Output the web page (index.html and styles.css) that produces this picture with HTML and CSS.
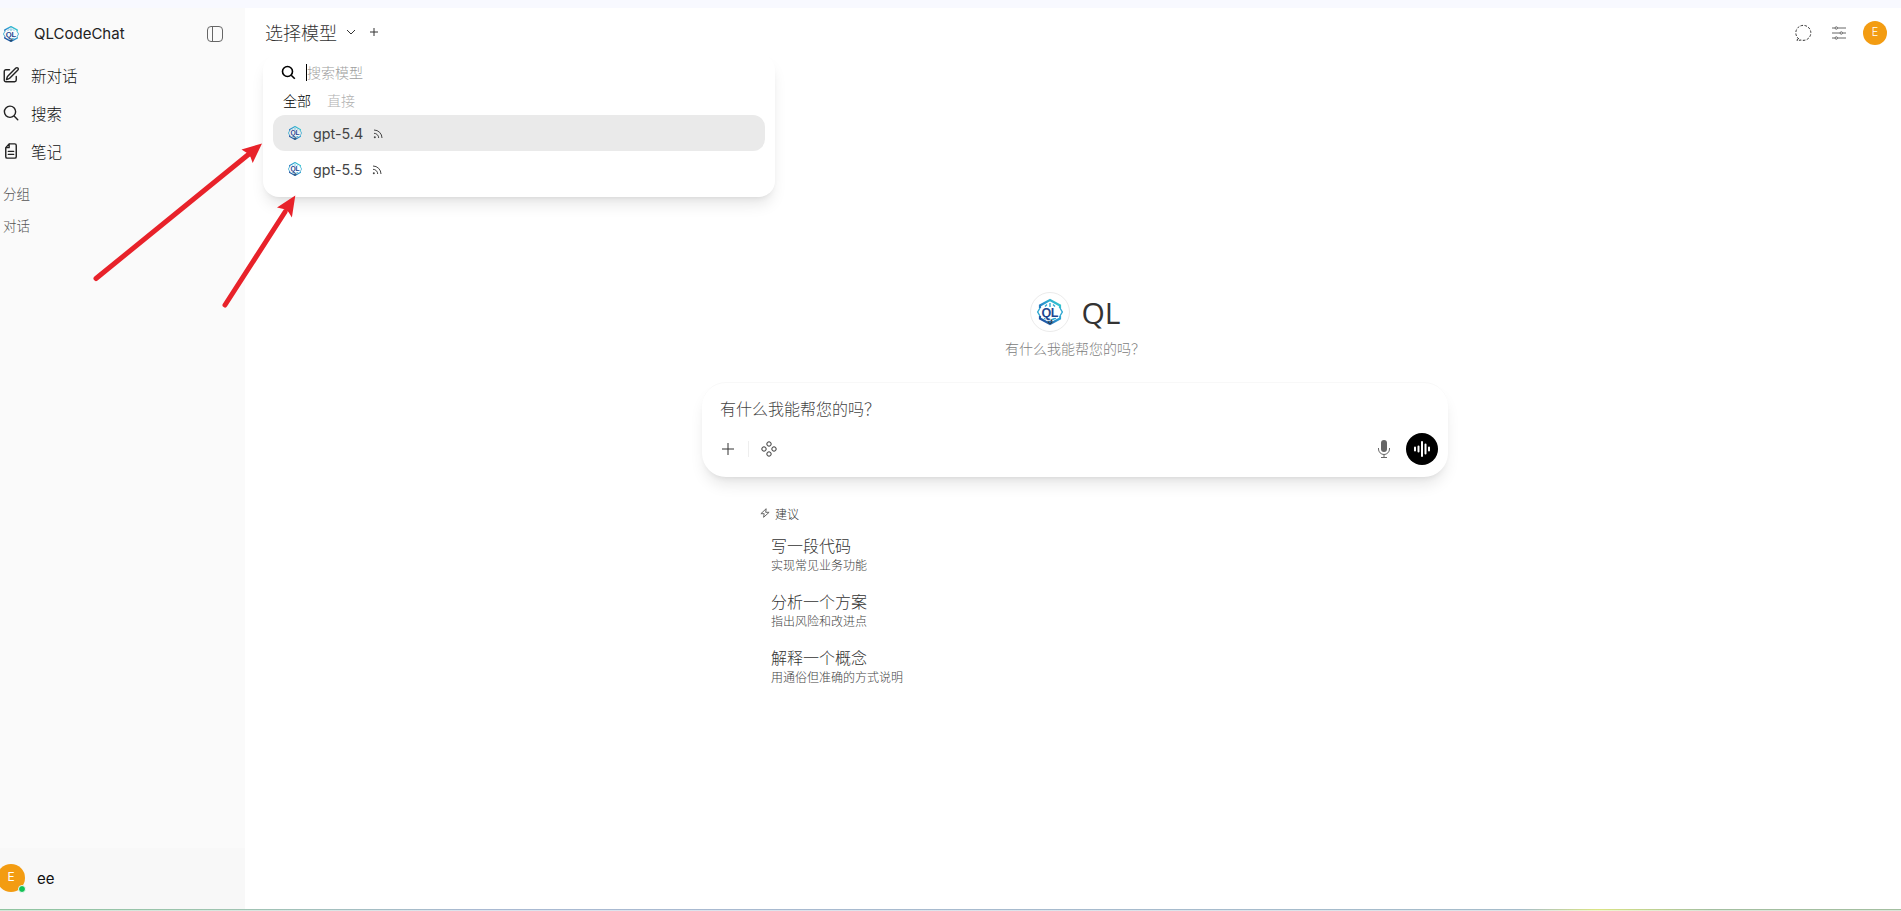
FILE: index.html
```html
<!DOCTYPE html>
<html lang="zh-CN">
<head>
  <meta charset="UTF-8" />
  <meta name="viewport" content="width=device-width, initial-scale=1.0"/>
  <title>QLCodeChat</title>
  <link rel="stylesheet" href="styles.css">
</head>
<body>
  <!-- shared logo -->
  <svg class="defs" width="0" height="0">
    <defs>
      <linearGradient id="logoGrad" x1="1" y1="0" x2="0" y2="1">
        <stop offset="0" stop-color="#35d0cf"/>
        <stop offset="0.5" stop-color="#2a93cf"/>
        <stop offset="1" stop-color="#1d3f94"/>
      </linearGradient>
      <symbol id="logo" viewBox="0 0 26 26">
        <path d="M3 9V6.500L13 1l10 5.500V9M3 17v2.500L13 25l10-5.500V17" fill="none" stroke="url(#logoGrad)" stroke-width="2.200"/>
        <path d="M3 9l-2.300 4L3 17M23 9l2.300 4-2.300 4M8 7.500l2-2M13 8V4M18 7.500l-2-2M7 19l6 2.500 6-2.500" fill="none" stroke="#2fa9d2" stroke-width="1.400"/>
        <circle cx="13" cy="22.500" r="2" fill="#1f6fb8"/>
        <text x="12.700" y="17.500" text-anchor="middle" class="logo-text">QL</text>
      </symbol>
      <symbol id="rss" viewBox="0 0 10 10">
        <path d="M1 1a8 8 0 0 1 8 8M1 4.300A4.700 4.700 0 0 1 5.700 9" fill="none" stroke="currentColor" stroke-width="1"/>
        <circle cx="1.800" cy="8.200" r="1" fill="currentColor" stroke="none"/>
      </symbol>
    </defs>
  </svg>

  <div class="top-strip"></div>

  <div class="layout">
    <aside class="sidebar">
      <div class="brand">
        <svg class="brand-logo" width="16" height="16"><use href="#logo"/></svg>
        <strong>QLCodeChat</strong>
        <svg class="toggle" width="18" height="18" viewBox="0 0 18 18">
          <rect x="1.500" y="1.500" width="15" height="15" rx="3.500"/>
          <path d="M6.500 1.500v15"/>
        </svg>
      </div>

      <nav>
        <a href="#">
          <svg width="18" height="18" viewBox="0 0 24 24"><path d="m16.862 4.487 1.687-1.688a1.875 1.875 0 1 1 2.652 2.652L10.582 16.070a4.500 4.500 0 0 1-1.897 1.130L6 18l.8-2.685a4.500 4.500 0 0 1 1.130-1.897l8.932-8.931ZM19 14v4.750A2.250 2.250 0 0 1 16.750 21H5.250A2.250 2.250 0 0 1 3 18.750V7.250A2.250 2.250 0 0 1 5.250 5H10"/></svg>
          新对话
        </a>
        <a href="#">
          <svg width="18" height="18" viewBox="0 0 24 24"><path d="m21 21-5.200-5.200m0 0A7.500 7.500 0 1 0 5.200 5.200a7.500 7.500 0 0 0 10.600 10.600Z"/></svg>
          搜索
        </a>
        <a href="#">
          <svg width="18" height="18" viewBox="0 0 24 24"><path d="M9.500 2.500H17A2 2 0 0 1 19 4.500v15a2 2 0 0 1-2 2H7a2 2 0 0 1-2-2V7.500l4.500-5v5H5M8.500 12.500h7M8.500 16.500h7"/></svg>
          笔记
        </a>
      </nav>

      <div class="section">分组</div>
      <div class="section">对话</div>

      <div class="user">
        <div class="avatar">E<span class="online"></span></div>
        <span>ee</span>
      </div>
    </aside>

    <main>
      <header>
        <div class="model-select">
          <span>选择模型</span>
          <svg class="chevron" width="10" height="10" viewBox="0 0 10 10"><path d="m1 3 4 4 4-4"/></svg>
          <svg class="add" width="10" height="10" viewBox="0 0 10 10"><path d="M5 1v8M1 5h8"/></svg>

          <div class="menu">
            <div class="menu-search">
              <svg width="15" height="15" viewBox="0 0 15 15"><circle cx="6.500" cy="6.500" r="5"/><path d="m10.200 10.200 3.600 3.600"/></svg>
              <span class="caret"></span>搜索模型
            </div>
            <div class="tabs"><span class="active">全部</span><span>直接</span></div>
            <div class="model active">
              <svg width="14" height="14"><use href="#logo"/></svg>
              gpt-5.4
              <svg class="rss" width="10" height="10"><use href="#rss"/></svg>
            </div>
            <div class="model">
              <svg width="14" height="14"><use href="#logo"/></svg>
              gpt-5.5
              <svg class="rss" width="10" height="10"><use href="#rss"/></svg>
            </div>
          </div>
        </div>

        <div class="tools">
          <svg width="18" height="18" viewBox="0 0 18 18"><path class="dashed" d="M4 15a7.500 7.500 0 1 1 2 1l-4 .6 1-3"/></svg>
          <svg class="sliders" width="16" height="16" viewBox="0 0 16 16">
            <path d="M1 3h3M6.500 3H15M1 8h8M11.500 8H15M1 13h3M6.500 13H15"/>
            <circle cx="5.300" cy="3" r="1.200"/><circle cx="10.300" cy="8" r="1.200"/><circle cx="5.300" cy="13" r="1.200"/>
          </svg>
          <div class="avatar small">E</div>
        </div>
      </header>

      <div class="content">
        <div class="hello">
          <div class="hello-logo"><svg width="26" height="28"><use href="#logo"/></svg></div>
          <h1>QL</h1>
        </div>
        <p class="subtitle">有什么我能帮您的吗？</p>

        <div class="composer">
          <div class="placeholder">有什么我能帮您的吗？</div>
          <div class="actions">
            <svg width="14" height="14" viewBox="0 0 14 14"><path d="M7 1v12M1 7h12"/></svg>
            <span class="divider"></span>
            <svg width="16" height="16" viewBox="0 0 16 16"><circle cx="8" cy="3" r="2.200"/><circle cx="3" cy="8" r="2.200"/><circle cx="13" cy="8" r="2.200"/><circle cx="8" cy="13" r="2.200"/></svg>
            <svg class="mic" width="14" height="20" viewBox="0 0 14 20">
              <rect x="4" y="1" width="6" height="12" rx="3"/>
              <path d="M1.500 9v1a5.500 5.500 0 0 0 11 0V9M7 15.500V18.500M4 18.500h6"/>
            </svg>
            <div class="voice">
              <svg width="18" height="18" viewBox="0 0 18 18"><path d="M2 7.500v3M5.500 6.500v5M9 2v14M12.500 4.500v9M16 7.500v3"/></svg>
            </div>
          </div>
        </div>

        <div class="suggestions">
          <div class="label">
            <svg width="10" height="10" viewBox="0 0 10 10"><path d="M6.200.7.900 5.700h3.300L3.600 9.300l5.500-5H5.700z"/></svg>
            建议
          </div>
          <div class="item"><b>写一段代码</b><small>实现常见业务功能</small></div>
          <div class="item"><b>分析一个方案</b><small>指出风险和改进点</small></div>
          <div class="item"><b>解释一个概念</b><small>用通俗但准确的方式说明</small></div>
        </div>
      </div>
    </main>
  </div>

  <div class="bottom-line"></div>

  <!-- red pointers over the model menu -->
  <svg class="arrows" width="310" height="320" viewBox="0 0 310 320">
    <path class="shaft" d="M96 278.500 249 154M225 305l60-93"/>
    <path class="head" d="M262 143.500 241.500 149.500l5.500 3.500 3.500 4 2.200 6zM295.300 195.500l-18.300 12 6.500 1.500 5 3 3.400 5.500z"/>
  </svg>
</body>
</html>
```

FILE: styles.css
```css
* {
  box-sizing: border-box;
}

body {
  margin: 0;
  height: 911px;
  display: flex;
  flex-direction: column;
  overflow: hidden;
  background: #fff;
  color: #333;
  font-family: Inter, "Noto Sans CJK SC", sans-serif;
  font-weight: 300;
}

svg {
  flex: none;
  fill: none;
  stroke: currentColor;
}

.defs {
  position: absolute;
}

.logo-text {
  font: bold 12.500px "Liberation Sans", sans-serif;
  letter-spacing: -0.5px;
  fill: #1d458f;
  stroke: #fff;
  stroke-width: 1.500px;
  paint-order: stroke;
}

.top-strip {
  height: 8px;
  flex: none;
  background: #f8f9ff;
}

.layout {
  flex: 1;
  display: flex;
  min-height: 0;
}

/* sidebar */
.sidebar {
  width: 245px;
  display: flex;
  flex-direction: column;
  background: #fafafa;
  color: #222;
}

.brand {
  display: flex;
  align-items: center;
  height: 48px;
  padding: 3px 21px 0 3px;
}

.brand strong {
  margin: 0 0 0 15px;
  font-size: 15px;
  font-weight: 400;
}

.toggle {
  margin-left: auto;
  color: #666;
}

nav a {
  display: flex;
  align-items: center;
  gap: 11px;
  height: 38px;
  padding-left: 2px;
  color: #111;
  font-size: 15.500px;
  text-decoration: none;
}

nav svg {
  color: #222;
  stroke-width: 1.900;
  stroke-linecap: round;
  stroke-linejoin: round;
}

.section {
  height: 32px;
  line-height: 32px;
  padding-left: 3px;
  font-size: 13.500px;
  color: #555;
}

nav + .section {
  margin-top: 8px;
}

.user {
  display: flex;
  align-items: center;
  gap: 12px;
  height: 61px;
  padding-bottom: 1px;
  margin-top: auto;
  background: #f8f8f8;
  color: #111;
  font-size: 15px;
  font-weight: 400;
}

.avatar {
  position: relative;
  width: 28px;
  height: 28px;
  margin-left: -3px;
  border-radius: 50%;
  background: #f39c12;
  color: #fff;
  font-size: 12px;
  line-height: 26px;
  text-align: center;
}

.avatar.small {
  width: 24px;
  height: 24px;
  margin: 0;
  font-size: 11px;
  line-height: 23px;
}

.online {
  position: absolute;
  right: -1px;
  bottom: -1px;
  width: 8px;
  height: 8px;
  border: 1px solid #f8f8f8;
  border-radius: 50%;
  background: #12c256;
}

/* main area */
main {
  flex: 1;
}

header {
  display: flex;
  justify-content: space-between;
  align-items: center;
  height: 50px;
  padding: 0 14px 0 20px;
}

.model-select {
  position: relative;
  top: -1px;
  display: flex;
  align-items: center;
  font-size: 18px;
}

.chevron {
  margin-left: 9px;
}

.add {
  margin-left: 13px;
}

.tools {
  display: flex;
  align-items: center;
  gap: 18px;
}

.tools .sliders {
  color: #666;
  margin-right: -2px;
}

.dashed {
  stroke-dasharray: 2.500 1.500;
}

.menu {
  position: absolute;
  top: 35px;
  left: -2px;
  width: 512px;
  height: 143px;
  padding: 1px 10px 0;
  border-radius: 16px;
  background: #fff;
  box-shadow: 0 10px 15px -3px rgba(0, 0, 0, 0.1), 0 4px 6px -4px rgba(0, 0, 0, 0.1);
  z-index: 1;
}

.menu-search {
  display: flex;
  align-items: center;
  height: 34px;
  padding-left: 8px;
  color: #a0a0a0;
  font-size: 14px;
}

.menu-search svg {
  color: #000;
  stroke-width: 1.600;
}

.caret {
  width: 1px;
  height: 17px;
  margin-left: 10px;
  background: #000;
}

.tabs {
  display: flex;
  gap: 16px;
  height: 26px;
  padding-left: 10px;
  color: #b0b0b0;
  font-size: 14px;
  line-height: 24px;
}

.tabs .active {
  color: #000;
}

.model {
  display: flex;
  align-items: center;
  height: 36px;
  padding-left: 15px;
  border-radius: 12px;
  color: #444;
  font-size: 14.300px;
  font-weight: 400;
}

.model.active {
  background: #eaeaea;
}

.model svg:first-child {
  margin-right: 11px;
}

.model .rss {
  margin: 2px 0 0 10px;
}

.content {
  width: 746px;
  margin: 233px 0 0 457px;
}

.hello {
  display: flex;
  align-items: center;
  justify-content: center;
  gap: 12px;
  height: 42px;
}

.hello-logo {
  display: flex;
  align-items: center;
  justify-content: center;
  width: 40px;
  height: 40px;
  border: 1px solid #ebebeb;
  border-radius: 50%;
}

h1 {
  margin: 0;
  color: #333;
  font: 400 30px "Open Sans", sans-serif;
}

.subtitle {
  height: 49px;
  margin: 0;
  color: #808080;
  font-size: 14px;
  line-height: 31px;
  text-align: center;
}

.composer {
  height: 95px;
  padding: 14px 10px 0 18px;
  border-top: 1px solid #f8f8f8;
  border-radius: 24px;
  box-shadow: 0 10px 15px -3px rgba(0, 0, 0, 0.1), 0 4px 6px -4px rgba(0, 0, 0, 0.1);
}

.placeholder {
  height: 36px;
  color: #444;
  font-size: 16px;
  line-height: 24px;
}

.actions {
  display: flex;
  align-items: center;
}

.actions > svg:first-child {
  margin-left: 1px;
}

.divider {
  width: 1px;
  height: 16px;
  margin: 0 12px 0 13px;
  background: #eee;
}

.mic {
  margin-left: auto;
  color: #666;
}

.mic rect {
  fill: #666;
  stroke: none;
}

.voice {
  display: flex;
  align-items: center;
  justify-content: center;
  width: 32px;
  height: 32px;
  margin-left: 15px;
  border-radius: 50%;
  background: #000;
  color: #fff;
}

.voice svg {
  stroke-width: 2;
  stroke-linecap: round;
}

.suggestions {
  padding: 25px 0 0 58px;
}

.label {
  display: flex;
  align-items: center;
  gap: 5px;
  height: 22px;
  font-size: 12px;
}

.label svg {
  color: #666;
}

.item {
  display: flex;
  flex-direction: column;
  height: 56px;
  padding: 11px 0 0 11px;
}

.item b {
  font-size: 16px;
  font-weight: 300;
  line-height: 22px;
}

.item small {
  color: #444;
  font-size: 12px;
  line-height: 18px;
}

.bottom-line {
  height: 2px;
  flex: none;
  background: linear-gradient(to right, #8fc5a0, #9fc4b0 12%, #a9b9d2 25%, #a5bcca 80%, #dbe583 84%, #a3bfa0 90%, #a3bfa0);
  border-bottom: 1px solid rgba(255, 255, 255, 0.6);
}

.arrows {
  position: absolute;
  top: 0;
  left: 0;
  z-index: 2;
}

.shaft {
  stroke: #e8222a;
  stroke-width: 5;
  stroke-linecap: round;
}

.head {
  fill: #e8222a;
  stroke: none;
}
```
